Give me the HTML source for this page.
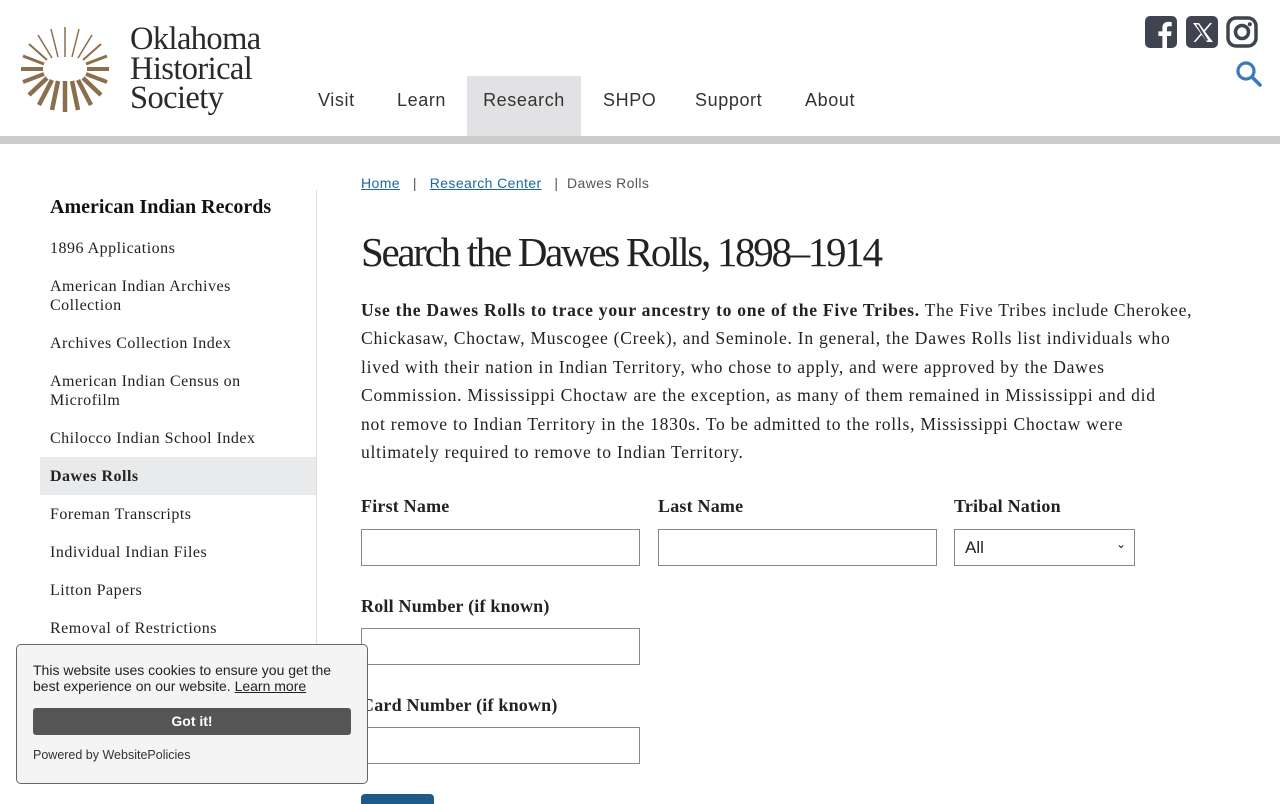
<!DOCTYPE html>
<html><head><meta charset="utf-8"><style>
*{box-sizing:border-box;margin:0;padding:0}
body{width:1280px;height:800px;overflow:hidden;background:#fff;font-family:"Liberation Serif",serif;color:#222;position:relative}
.hdr{position:absolute;left:0;top:0;width:1280px;height:136px}
.bar{position:absolute;left:0;top:136px;width:1280px;height:8px;background:#ccc}
.logo-t{position:absolute;left:130px;top:25px;font-size:32.5px;line-height:29.5px;color:#2a2a2a;letter-spacing:-0.6px}
.nav{position:absolute;top:76px;left:0;height:60px;font-family:"Liberation Sans",sans-serif;font-size:18px;color:#333;letter-spacing:0.6px}
.nav div{position:absolute;top:0;line-height:48px;white-space:nowrap}
.nav .act{background:#e2e2e4;height:60px;left:467px;width:114px;text-align:center}
.side{position:absolute;left:40px;top:190px;width:277px;border-right:1px solid #ddd;height:460px}
.side h3{font-size:20px;font-weight:bold;margin:6px 0 0 10px;color:#111}
.side ul{list-style:none;margin-top:10px}
.side li{font-size:16px;line-height:19px;padding:9.5px 60px 9.5px 10px;color:#222;letter-spacing:0.5px}
.side li.on{background:#e9eaec;font-weight:bold}
.main{position:absolute;left:361px;top:0}
.bc{position:absolute;top:175px;left:0;font-family:"Liberation Sans",sans-serif;font-size:14px;color:#555;white-space:nowrap;letter-spacing:0.4px}
.bc a{color:#1a6aa0;text-decoration:underline}
h1{position:absolute;top:228px;left:0;font-size:41px;font-weight:normal;letter-spacing:-2.3px;white-space:nowrap;color:#222}
.p{position:absolute;top:296px;left:0;width:900px;font-size:17.6px;line-height:28.4px;color:#222;white-space:nowrap;letter-spacing:0.72px}
label{position:absolute;font-weight:bold;font-size:18px;color:#222;white-space:nowrap;letter-spacing:0.2px}
.in{position:absolute;width:279px;height:37px;border:1px solid #888;background:#fff}
.sel{position:absolute;left:593px;top:529px;width:181px;height:37px;border:1px solid #888;font-family:"Liberation Sans",sans-serif;font-size:17px;padding:8px 0 0 10px}
.cookie{position:absolute;left:16px;top:644px;width:352px;height:140px;background:#f4f4f4;border:1px solid #666;border-radius:5px;font-family:"Liberation Sans",sans-serif}
.cookie .t{position:absolute;left:16px;top:17px;font-size:14px;line-height:16px;color:#222;width:320px}
.cookie .b{position:absolute;left:16px;top:63px;width:318px;height:27px;background:#555;color:#fff;border-radius:3px;text-align:center;font-weight:bold;font-size:14px;line-height:27px}
.cookie .pw{position:absolute;left:16px;top:103px;font-size:12.5px;color:#333}
</style></head><body>
<div class="hdr">
<svg style="position:absolute;left:20px;top:24px" width="90" height="90" viewBox="-45 -45 90 90">
<g fill="none" stroke="#8b6e4c">
<line x1="0" y1="-12" x2="0" y2="-42" stroke-width="1.5"/>
<line x1="7" y1="-12" x2="14" y2="-40" stroke-width="1.5"/>
<line x1="-7" y1="-12" x2="-14" y2="-40" stroke-width="1.5"/>
<line x1="13" y1="-11" x2="27" y2="-34" stroke-width="1.5"/>
<line x1="-13" y1="-11" x2="-27" y2="-34" stroke-width="1.5"/>
<line x1="18" y1="-9" x2="36" y2="-25" stroke-width="2"/>
<line x1="-18" y1="-9" x2="-36" y2="-25" stroke-width="2"/>
<line x1="21" y1="-5" x2="42" y2="-13" stroke-width="3"/>
<line x1="-21" y1="-5" x2="-42" y2="-13" stroke-width="3"/>
<line x1="22" y1="0" x2="44" y2="0" stroke-width="4"/>
<line x1="-22" y1="0" x2="-44" y2="0" stroke-width="4"/>
<line x1="21" y1="5" x2="42" y2="13" stroke-width="4"/>
<line x1="-21" y1="5" x2="-42" y2="13" stroke-width="4"/>
<line x1="18" y1="9" x2="36" y2="26" stroke-width="4.5"/>
<line x1="-18" y1="9" x2="-36" y2="26" stroke-width="4.5"/>
<line x1="13" y1="11" x2="26" y2="36" stroke-width="4.5"/>
<line x1="-13" y1="11" x2="-26" y2="36" stroke-width="4.5"/>
<line x1="7" y1="12" x2="13" y2="41" stroke-width="4.5"/>
<line x1="-7" y1="12" x2="-13" y2="41" stroke-width="4.5"/>
<line x1="0" y1="12" x2="0" y2="43" stroke-width="4.5"/>
</g>
</svg>
<div class="logo-t">Oklahoma<br>Historical<br>Society</div>
<div class="nav"><div style="left:318px">Visit</div><div style="left:397px">Learn</div><div class="act">Research</div><div style="left:603px">SHPO</div><div style="left:695px">Support</div><div style="left:805px">About</div></div>
<svg style="position:absolute;left:1145px;top:16px" width="32" height="32" viewBox="0 0 32 32"><rect width="32" height="32" rx="5" fill="#3f4450"/><path d="M22 32V20h4l.6-4.6H22v-3c0-1.3.4-2.2 2.3-2.2h2.4V6.1c-.4-.1-1.9-.2-3.5-.2-3.5 0-5.8 2.1-5.8 6v3.5h-4V20h4v12z" fill="#fff"/></svg>
<svg style="position:absolute;left:1186px;top:16px" width="32" height="32" viewBox="0 0 32 32"><rect width="32" height="32" rx="5" fill="#3f4450"/><path d="M7 7h6l5 7 6-7h2l-7 8.5 8 10.5h-6l-5.3-7.2L9.5 26h-2l7.3-8.6z" fill="#fff"/><path d="M10 8.5h2.4l10 16h-2.4z" fill="#3f4450"/></svg>
<svg style="position:absolute;left:1226px;top:16px" width="32" height="32" viewBox="0 0 32 32"><rect x="2" y="2" width="28" height="28" rx="8" fill="none" stroke="#3f4450" stroke-width="3.5"/><circle cx="16" cy="16" r="6.5" fill="none" stroke="#3f4450" stroke-width="3.5"/><circle cx="23.8" cy="8.2" r="2" fill="#3f4450"/></svg>
<svg style="position:absolute;left:1235px;top:60px" width="28" height="28" viewBox="0 0 28 28"><circle cx="11" cy="11" r="8" fill="none" stroke="#3a7ab5" stroke-width="3.2"/><line x1="17" y1="17" x2="25" y2="25" stroke="#3a7ab5" stroke-width="3.6" stroke-linecap="round"/></svg>
</div>
<div class="bar"></div>
<div class="side">
<h3>American Indian Records</h3>
<ul>
<li>1896 Applications</li>
<li>American Indian Archives Collection</li>
<li>Archives Collection Index</li>
<li>American Indian Census on Microfilm</li>
<li>Chilocco Indian School Index</li>
<li class="on">Dawes Rolls</li>
<li>Foreman Transcripts</li>
<li>Individual Indian Files</li>
<li>Litton Papers</li>
<li>Removal of Restrictions</li>
</ul>
</div>
<div class="main">
<div class="bc"><a>Home</a> &nbsp;&nbsp;|&nbsp;&nbsp; <a>Research Center</a> &nbsp;&nbsp;|&nbsp;&nbsp;Dawes Rolls</div>
<h1>Search the Dawes Rolls, 1898–1914</h1>
<div class="p"><b>Use the Dawes Rolls to trace your ancestry to one of the Five Tribes.</b> The Five Tribes include Cherokee,<br>Chickasaw, Choctaw, Muscogee (Creek), and Seminole. In general, the Dawes Rolls list individuals who<br>lived with their nation in Indian Territory, who chose to apply, and were approved by the Dawes<br>Commission. Mississippi Choctaw are the exception, as many of them remained in Mississippi and did<br>not remove to Indian Territory in the 1830s. To be admitted to the rolls, Mississippi Choctaw were<br>ultimately required to remove to Indian Territory.</div>
<label style="left:0;top:496px">First Name</label>
<label style="left:297px;top:496px">Last Name</label>
<label style="left:593px;top:496px">Tribal Nation</label>
<div class="in" style="left:0;top:529px"></div>
<div class="in" style="left:297px;top:529px"></div>
<div class="sel">All<span style="position:absolute;right:8px;top:7px;font-size:12px">&#8964;</span></div>
<label style="left:0;top:596px">Roll Number (if known)</label>
<div class="in" style="left:0;top:628px"></div>
<label style="left:0;top:695px">Card Number (if known)</label>
<div class="in" style="left:0;top:727px"></div>
<div style="position:absolute;left:0;top:794px;width:73px;height:10px;background:#1d5a8c;border-radius:4px 4px 0 0"></div>
</div>
<div class="cookie">
<div class="t">This website uses cookies to ensure you get the best experience on our website. <u>Learn more</u></div>
<div class="b">Got it!</div>
<div class="pw">Powered by WebsitePolicies</div>
</div>
</body></html>
